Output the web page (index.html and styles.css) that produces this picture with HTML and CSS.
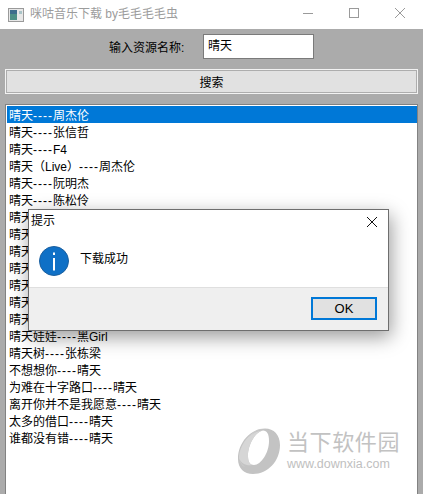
FILE: index.html
```html
<!DOCTYPE html>
<html lang="zh-CN">
<head>
<meta charset="utf-8">
<title>咪咕音乐下载</title>
<link rel="stylesheet" href="styles.css">
</head>
<body>
<div class="window">
  <header class="titlebar">
    <svg class="app-icon" width="16" height="14" viewBox="0 0 16 14"><rect x=".5" y=".5" width="15" height="13" fill="#e8e8e8" stroke="#9a9a9a"/><rect x="2" y="2" width="7" height="10" fill="#4d8f86"/><rect x="2" y="2" width="7" height="4" fill="#3d6d8c"/><rect x="11" y="3" width="3" height="3" fill="#a9c4c8"/></svg>
    <span class="title">咪咕音乐下载 by毛毛毛毛虫</span>
    <div class="controls">
      <svg width="46" height="29" viewBox="0 0 46 29"><path d="M18 13.500h10" stroke="#9a9a9a" fill="none"/></svg>
      <svg width="46" height="29" viewBox="0 0 46 29"><rect x="18.500" y="8.500" width="9" height="9" stroke="#9a9a9a" fill="none"/></svg>
      <svg width="46" height="29" viewBox="0 0 46 29"><path d="M18 8l10 10M28 8L18 18" stroke="#9a9a9a" fill="none"/></svg>
    </div>
  </header>
  <main class="content">
    <div class="form-row">
      <label class="label">输入资源名称:</label>
      <div class="input">晴天</div>
    </div>
    <button class="search">搜索</button>
    <div class="list">
      <div class="row selected">晴天<span class="dash">----</span>周杰伦</div>
      <div class="row">晴天<span class="dash">----</span>张信哲</div>
      <div class="row">晴天<span class="dash">----</span>F4</div>
      <div class="row">晴天（Live）<span class="dash">----</span>周杰伦</div>
      <div class="row">晴天<span class="dash">----</span>阮明杰</div>
      <div class="row">晴天<span class="dash">----</span>陈松伶</div>
      <div class="row">晴天<span class="dash">----</span>刘若英</div>
      <div class="row">晴天<span class="dash">----</span>孙燕姿</div>
      <div class="row">晴天<span class="dash">----</span>林忆莲</div>
      <div class="row">晴天<span class="dash">----</span>五月天</div>
      <div class="row">晴天<span class="dash">----</span>蔡健雅</div>
      <div class="row">晴天<span class="dash">----</span>徐佳莹</div>
      <div class="row">晴天<span class="dash">----</span>李健</div>
      <div class="row">晴天娃娃<span class="dash">----</span>黑Girl</div>
      <div class="row">晴天树<span class="dash">----</span>张栋梁</div>
      <div class="row">不想想你<span class="dash">----</span>晴天</div>
      <div class="row">为难在十字路口<span class="dash">----</span>晴天</div>
      <div class="row">离开你并不是我愿意<span class="dash">----</span>晴天</div>
      <div class="row">太多的借口<span class="dash">----</span>晴天</div>
      <div class="row">谁都没有错<span class="dash">----</span>晴天</div>
    </div>
  </main>
  <div class="watermark">
    <svg width="42" height="46" viewBox="0 0 42 46"><path fill-rule="evenodd" fill="#c3c3c3" d="M27 0.500C36 0.500 42 7 42 17C42 33 30 46 15 46C6 46 0 40 0 31C0 14 13 0.500 27 0.500ZM25 2.500C17 4 10 17 10 28C10 34 12 37 16 37C23 37 31 25 31 13C31 6 29 2.500 25 2.500Z"/><path fill="#d6d6d6" d="M25 1C14 2 3 14 1 28C1 33 3 36 7 39C3 37 1 33 1 29C2 17 13 3 25 1ZM1 30C3 36 9 38 14 37C11 36 10 32 10 28C10 17 17 4 25 2.500C13 3 2 16 1 30Z"/></svg>
    <div class="wm-text">
      <div class="wm-cn">当下软件园</div>
      <div class="wm-url">www.downxia.com</div>
    </div>
  </div>
  <section class="dialog">
    <div class="dialog-head">
      <span class="dialog-title">提示</span>
      <svg width="12" height="12" viewBox="0 0 12 12"><path d="M1 1l10 10M11 1L1 11" stroke="#111" fill="none"/></svg>
    </div>
    <div class="dialog-body">
      <svg width="30" height="30" viewBox="0 0 30 30"><circle cx="15" cy="15" r="14.500" fill="#0f70c6" stroke="#1b5f9f"/><rect x="14" y="12" width="2" height="12.500" fill="#fff"/><rect x="14" y="6.500" width="2" height="2.500" fill="#fff"/></svg>
      <span class="dialog-msg">下载成功</span>
    </div>
    <div class="dialog-foot">
      <button class="ok">OK</button>
    </div>
  </section>
</div>
</body>
</html>
```
FILE: styles.css
```css
* { box-sizing: border-box; }
html, body { margin: 0; padding: 0; }
body {
  font-family: "Liberation Sans", "Noto Sans CJK SC", sans-serif;
  font-size: 12px;
  color: #000;
}
.window {
  position: relative;
  width: 423px;
  height: 494px;
  display: flex;
  flex-direction: column;
  overflow: hidden;
  background: #ababab;
}
.titlebar {
  height: 29px;
  flex: none;
  display: flex;
  align-items: center;
  background: #fff;
  padding-left: 8px;
}
.app-icon { margin-right: 6px; }
.title { color: #9c9c9c; font-size: 12px; line-height: 28px; height: 29px; flex: 1; }
.controls { display: flex; }
.controls svg { display: block; }
.content {
  flex: 1;
  min-height: 0;
  display: flex;
  flex-direction: column;
  padding: 5px 5px 0;
}
.form-row {
  height: 25px;
  display: flex;
  align-items: center;
  padding-left: 104px;
  gap: 16px;
}
.label { width: 78px; white-space: nowrap; }
.input {
  width: 111px;
  height: 25px;
  background: #fff;
  border: 1px solid #7a7a7a;
  padding: 0 4px;
  line-height: 22px;
  font-size: 12px;
}
.search {
  margin-top: 10px;
  height: 25px;
  flex: none;
  background: #e1e1e1;
  border: 1px solid #f2f2f2;
  outline: 1px solid #adadad;
  outline-offset: -2px;
  font: inherit;
  color: #000;
  padding: 0;
}
.list {
  margin-top: 10px;
  flex: 1;
  background: #fff;
  border: 1px solid #828282;
  border-bottom: none;
  padding: 1px 0 1px 1px;
}
.row {
  height: 17px;
  line-height: 20px;
  padding-left: 2px;
  white-space: nowrap;
  overflow: hidden;
}
.row.selected { background: #0078d7; color: #fff; }
.dash { letter-spacing: 1px; }
.watermark {
  position: absolute;
  left: 238px;
  top: 428px;
  display: flex;
  gap: 7px;
}
.wm-text { padding-top: 2px; }
.wm-cn { font-size: 22px; line-height: 26px; letter-spacing: .6px; color: #c2c2c2; white-space: nowrap; }
.wm-url { font-size: 12.500px; line-height: 15px; margin-top: 1px; color: #c0c0c0; white-space: nowrap; }
.dialog {
  position: absolute;
  left: 28px;
  top: 209px;
  width: 361px;
  height: 122px;
  background: #fff;
  border: 1px solid #6e6e6e;
  box-shadow: 2px 6px 18px rgba(0, 0, 0, .4);
  display: flex;
  flex-direction: column;
}
.dialog-head {
  height: 25px;
  display: flex;
  align-items: flex-start;
  justify-content: space-between;
  padding: 6px 10px 0 2px;
}
.dialog-title { line-height: 12px; margin-top: -1px; }
.dialog-body {
  height: 52px;
  display: flex;
  align-items: flex-start;
  gap: 11px;
  padding: 11px 0 0 10px;
}
.dialog-msg { margin-top: 3px; }
.dialog-foot {
  flex: 1;
  background: #efefef;
  border-top: 1px solid #dfdfdf;
  display: flex;
  justify-content: flex-end;
  align-items: flex-start;
  padding: 9px 11px 0 0;
}
.ok {
  width: 66px;
  height: 23px;
  background: #e1e1e1;
  border: 2px solid #0078d7;
  font: inherit;
  font-size: 13px;
  padding: 0;
  color: #000;
}
```
